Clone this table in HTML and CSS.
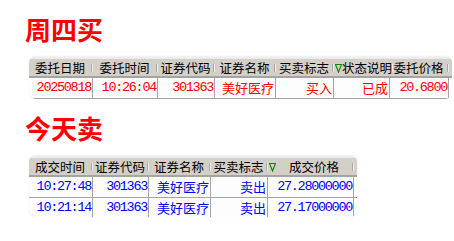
FILE: index.html
```html
<!DOCTYPE html>
<html lang="zh-CN">
<head>
<meta charset="utf-8">
<title>周四买 今天卖</title>
<link rel="stylesheet" href="styles.css">
</head>
<body>
<div class="page">
  <h1 class="title">周四买</h1>
  <div class="grid grid-buy">
    <div class="row head">
      <div class="hc w64"><span class="lbl">委托日期</span><span class="sep"></span></div>
      <div class="hc w65"><span class="lbl">委托时间</span><span class="sep"></span></div>
      <div class="hc w57"><span class="lbl">证券代码</span><span class="sep"></span></div>
      <div class="hc w61"><span class="lbl">证券名称</span><span class="sep"></span></div>
      <div class="hc w58"><span class="lbl">买卖标志</span><span class="sep"></span></div>
      <div class="hc w56"><svg class="sort" width="7" height="10" viewBox="0 0 7 10"><path d="M0.5 1.5 H6.5 L3.5 9 Z" fill="none" stroke="#0a8a0a" stroke-width="1.2"/></svg><span class="lbl">状态说明</span><span class="sep"></span></div>
      <div class="hc w59"><span class="lbl">委托价格</span><span class="sep"></span></div>
    </div>
    <div class="row data red">
      <div class="dc w64 n">20250818</div>
      <div class="dc w65 n">10:26:04</div>
      <div class="dc w57 n">301363</div>
      <div class="dc w61">美好医疗</div>
      <div class="dc w58">买入</div>
      <div class="dc w56">已成</div>
      <div class="dc w59 n">20.6800</div>
    </div>
  </div>

  <h1 class="title title2">今天卖</h1>
  <div class="grid grid-sell">
    <div class="row head">
      <div class="hc w64"><span class="lbl">成交时间</span><span class="sep"></span></div>
      <div class="hc w56"><span class="lbl">证券代码</span><span class="sep"></span></div>
      <div class="hc w62"><span class="lbl">证券名称</span><span class="sep"></span></div>
      <div class="hc w57"><span class="lbl">买卖标志</span><span class="sep"></span></div>
      <div class="hc w86"><svg class="sort" width="7" height="10" viewBox="0 0 7 10"><path d="M0.5 1.5 H6.5 L3.5 9 Z" fill="none" stroke="#0a8a0a" stroke-width="1.2"/></svg><span class="lbl">成交价格</span><span class="sep"></span></div>
    </div>
    <div class="row data blue">
      <div class="dc w64 n">10:27:48</div>
      <div class="dc w56 n">301363</div>
      <div class="dc w62">美好医疗</div>
      <div class="dc w57">卖出</div>
      <div class="dc w86 n">27.28000000</div>
    </div>
    <div class="row data blue">
      <div class="dc w64 n">10:21:14</div>
      <div class="dc w56 n">301363</div>
      <div class="dc w62">美好医疗</div>
      <div class="dc w57">卖出</div>
      <div class="dc w86 n">27.17000000</div>
    </div>
  </div>
</div>
</body>
</html>
```

FILE: styles.css
```css
html, body {
  margin: 0;
  padding: 0;
  background: #ffffff;
}

.page {
  padding: 16px 0 0 25px;
  font-family: "Noto Sans CJK SC", "Noto Sans", sans-serif;
}

.title {
  margin: 0;
  font-size: 26px;
  line-height: 26px;
  font-weight: 700;
  color: #ff0000;
  font-family: "Noto Sans CJK SC", sans-serif;
}

.title2 {
  margin-top: 16px;
}

.grid {
  margin: 14px 0 0 4px;
  background: linear-gradient(#f4f4f4, #e4e4e4 4px, #ececec);
  border-radius: 7px;
  padding-top: 3px;
  overflow: hidden;
  box-shadow: 0 0 1px rgba(0, 0, 0, 0.18);
}

.grid-buy {
  width: 423px;
  height: 40px;
}

.grid-sell {
  width: 328px;
  height: 59px;
}

.row {
  display: flex;
}

.head {
  height: 17px;
  background: #d4d0c8;
  border-bottom: 2px solid #a4a4a4;
  font-size: 12.5px;
  color: #000;
}

.hc {
  display: flex;
  align-items: center;
  height: 17px;
  box-sizing: border-box;
}

.hc .lbl {
  flex: 1;
  text-align: center;
  white-space: nowrap;
  line-height: 17px;
}

.hc .sep {
  width: 2px;
  height: 8px;
  background: #a8a8a8;
  border-right: 1px solid #eeeeee;
  box-sizing: border-box;
  margin-right: 0;
}

.sort {
  flex: none;
  margin-left: 1px;
  margin-top: 1px;
}

.data {
  height: 20px;
  background: #fdfdfd;
  border-bottom: 1px solid #a4a4a4;
  font-size: 13px;
}

.dc {
  box-sizing: border-box;
  height: 20px;
  line-height: 20px;
  text-align: right;
  padding-right: 1px;
  border-right: 1px solid #a4a4a4;
  white-space: nowrap;
}

.n {
  font-family: "Liberation Mono", monospace;
  font-size: 13.5px;
  letter-spacing: -1.3px;
}

.red { color: #ff0000; }
.blue { color: #0000ff; }

.w56 { width: 56px; }
.w57 { width: 57px; }
.w58 { width: 58px; }
.w59 { width: 59px; }
.w61 { width: 61px; }
.w62 { width: 62px; }
.w64 { width: 64px; }
.w65 { width: 65px; }
.w86 { width: 86px; }
```
